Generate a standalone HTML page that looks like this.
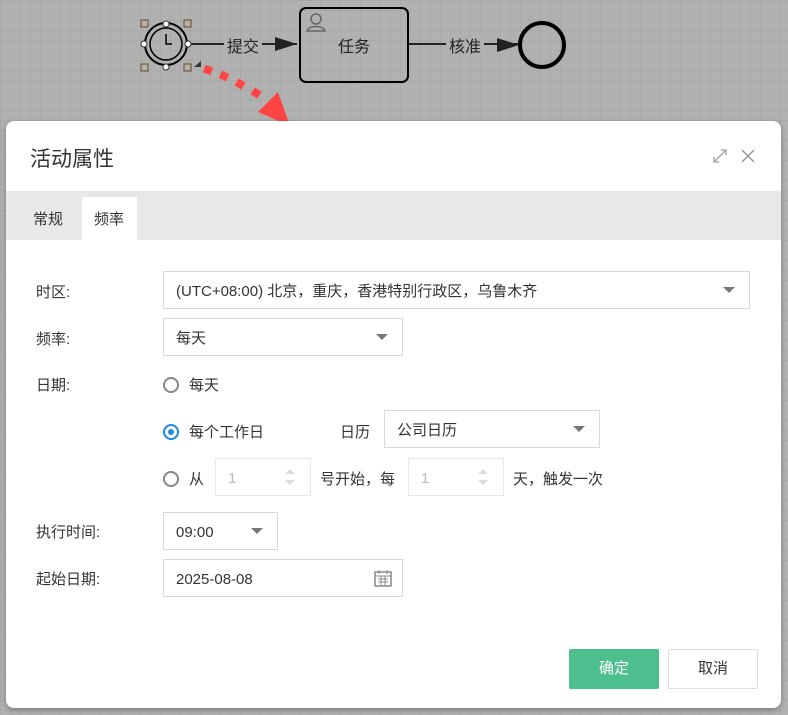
<!DOCTYPE html>
<html><head><meta charset="utf-8"><style>
body{margin:0;width:788px;height:715px;overflow:hidden;background:#b1b1b1;font-family:"Liberation Sans","Noto Sans CJK SC",sans-serif;color:#333;position:relative}
.a{position:absolute}
.bg{background-image:linear-gradient(rgba(0,0,0,.04) 1px,transparent 1px),linear-gradient(90deg,rgba(0,0,0,.04) 1px,transparent 1px);background-size:10px 10px;width:788px;height:715px}
.dlg{left:6px;top:121px;width:775px;height:587px;background:#fff;border-radius:8px;box-shadow:0 2px 6px rgba(0,0,0,.3)}
.lbl{font-size:15px;color:#333;line-height:20px;height:20px;margin-top:2px}
.box{border:1px solid #d9d9d9;background:#fff;box-sizing:border-box;font-size:15px;color:#333;padding-left:12px;padding-top:4px;display:flex;align-items:center;line-height:20px}
.caret{position:absolute;width:0;height:0;border-left:6px solid transparent;border-right:6px solid transparent;border-top:6px solid #777}
.radio{width:16px;height:16px;border:2px solid #888;border-radius:50%;box-sizing:border-box}
</style></head><body>
<div class="a bg"></div>
<svg class="a" style="left:0;top:0" width="788" height="130">
<g fill="none" stroke="#000">
<circle cx="166" cy="44" r="21" stroke-width="2"/>
<circle cx="166" cy="44" r="16" stroke-width="1.5"/>
<path d="M166 34v10h6" stroke-width="1.5"/>
<path d="M187 44h110" stroke="#222" stroke-width="2"/>
<rect x="300" y="8" width="108" height="74" rx="6" stroke-width="2"/>
<path d="M409 44h110" stroke="#222" stroke-width="2"/>
<circle cx="542" cy="45" r="22" stroke-width="4"/>
</g>
<path d="M297 44l-22-7v14z M519 45l-22-7v14z" fill="#222"/>
<g fill="#a07a30" stroke="#6a4a10" stroke-width="1">
<rect x="141" y="20" width="7" height="7" fill="none"/><rect x="184" y="20" width="7" height="7" fill="none"/>
<rect x="141" y="64" width="7" height="7" fill="none"/><rect x="184" y="64" width="7" height="7" fill="none"/>
</g>
<g fill="#fff" stroke="#333"><circle cx="166" cy="24" r="3"/><circle cx="166" cy="67" r="3"/><circle cx="144" cy="44" r="3"/><circle cx="188" cy="44" r="3"/></g>
<path d="M194 67l7-6v6z" fill="#333"/>
<circle cx="316" cy="19" r="5" fill="none" stroke="#666" stroke-width="1.5"/><path d="M307 31c1-6 17-6 18 0z" fill="none" stroke="#666" stroke-width="1.5"/>
<g fill="#f44">
<rect x="204" y="66" width="8" height="8" transform="rotate(20 208 70)"/>
<rect x="220" y="72" width="8" height="8" transform="rotate(25 224 76)"/>
<rect x="236" y="80" width="8" height="8" transform="rotate(30 240 84)"/>
<rect x="252" y="89" width="8" height="8" transform="rotate(35 256 93)"/>
<path d="M258 112l20-20 12 34z"/>
</g>
<rect x="224" y="36" width="38" height="18" fill="#b1b1b1"/>
<rect x="446" y="36" width="38" height="18" fill="#b1b1b1"/>
<text x="227" y="52" font-size="16" fill="#222" font-family="Liberation Sans,Noto Sans CJK SC,sans-serif">提交</text>
<text x="449" y="52" font-size="16" fill="#222" font-family="Liberation Sans,Noto Sans CJK SC,sans-serif">核准</text>
<text x="338" y="52" font-size="16" fill="#222" font-family="Liberation Sans,Noto Sans CJK SC,sans-serif">任务</text>
</svg>
<div class="a dlg">
<div class="a" style="left:24px;top:22px;font-size:21px;color:#333">活动属性</div>
<svg class="a" style="left:706px;top:27px" width="44" height="16"><path d="M2 14l12-12M9 2h5v5M2 9v5h5" fill="none" stroke="#aaa" stroke-width="1.5"/><path d="M30 2l12 12M42 2l-12 12" stroke="#999" stroke-width="1.5"/></svg>
<div class="a" style="left:0;top:70px;width:775px;height:49px;background:#e8e8e8"></div>
<div class="a" style="left:76px;top:76px;width:55px;height:43px;background:#fff"></div>
<div class="a" style="left:27px;top:87px;font-size:15px">常规</div>
<div class="a" style="left:88px;top:87px;font-size:15px">频率</div>
<div class="a lbl" style="left:30px;top:160px">时区:</div>
<div class="a box" style="left:157px;top:150px;width:587px;height:38px">(UTC+08:00) 北京，重庆，香港特别行政区，乌鲁木齐<span class="caret" style="right:14px;top:15px"></span></div>
<div class="a lbl" style="left:30px;top:207px">频率:</div>
<div class="a box" style="left:157px;top:197px;width:240px;height:38px">每天<span class="caret" style="right:14px;top:15px"></span></div>
<div class="a lbl" style="left:30px;top:253px">日期:</div>
<div class="a radio" style="left:157px;top:256px"></div>
<div class="a lbl" style="left:183px;top:253px">每天</div>
<div class="a radio" style="left:157px;top:303px;border-color:#1e88e5"><div style="width:6px;height:6px;background:#1e88e5;border-radius:50%;margin:3px"></div></div>
<div class="a lbl" style="left:183px;top:300px">每个工作日</div>
<div class="a lbl" style="left:334px;top:300px">日历</div>
<div class="a box" style="left:378px;top:289px;width:216px;height:38px">公司日历<span class="caret" style="right:14px;top:15px"></span></div>
<div class="a radio" style="left:157px;top:350px"></div>
<div class="a lbl" style="left:183px;top:347px">从</div>
<div class="a box" style="left:209px;top:337px;width:96px;height:38px;color:#bbb;border-color:#e8e8e8">1<svg class="a" style="left:68px;top:9px" width="12" height="18"><path d="M1 6l5-5 5 5zM1 12l5 5 5-5z" fill="#ddd"/></svg></div>
<div class="a lbl" style="left:314px;top:347px">号开始，每</div>
<div class="a box" style="left:402px;top:337px;width:96px;height:38px;color:#bbb;border-color:#e8e8e8">1<svg class="a" style="left:68px;top:9px" width="12" height="18"><path d="M1 6l5-5 5 5zM1 12l5 5 5-5z" fill="#ddd"/></svg></div>
<div class="a lbl" style="left:507px;top:347px">天，触发一次</div>
<div class="a lbl" style="left:30px;top:400px">执行时间:</div>
<div class="a box" style="left:157px;top:391px;width:115px;height:38px">09:00<span class="caret" style="right:14px;top:15px"></span></div>
<div class="a lbl" style="left:30px;top:447px">起始日期:</div>
<div class="a box" style="left:157px;top:438px;width:240px;height:38px">2025-08-08<svg class="a" style="left:210px;top:9px" width="18" height="18"><rect x="1" y="3" width="16" height="14" fill="none" stroke="#888" stroke-width="1.5"/><path d="M5 1v4M13 1v4M1 7h16M4 10h10M4 13h10M7 7v10M11 7v10" stroke="#888"/></svg></div>
<div class="a" style="left:563px;top:528px;width:90px;height:40px;background:#4cbf8c;border-radius:2px;color:#fff;font-size:15px;text-align:center;line-height:40px">确定</div>
<div class="a" style="left:662px;top:528px;width:88px;height:38px;border:1px solid #ddd;border-radius:2px;font-size:15px;text-align:center;line-height:38px">取消</div>
</div>
</body></html>
